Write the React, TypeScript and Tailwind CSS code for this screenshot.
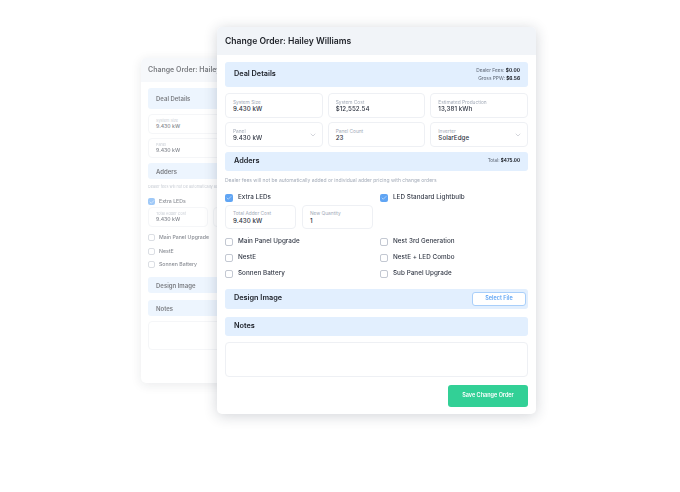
import { ChevronDown, Check } from "lucide-react";
import React from "react";

const Field = ({ label, value, chevron, small }: { label: string; value: string; chevron?: boolean; small?: boolean }) => (
  <div className={`relative min-w-0 rounded-[4px] border border-[#eef0f4] bg-white pl-[7px] ${small ? "h-[20px] pt-[3px]" : "h-[24.5px] pt-[4.5px]"}`}>
    <div className={`whitespace-nowrap text-[#a3abb8] ${small ? "text-[3.8px] leading-[5px]" : "text-[4.8px] leading-[6.5px]"}`}>{label}</div>
    <div className={`whitespace-nowrap font-medium text-[#2f3542] ${small ? "text-[5.2px] leading-[7px]" : "text-[6.2px] leading-[8.5px] tracking-[0.05px]"}`}>{value}</div>
    {chevron && <ChevronDown size={8} strokeWidth={1} className="absolute right-[5px] top-[8px] text-[#7b8494]" />}
  </div>
);

const Adder = ({ label, checked, small }: { label: string; checked?: boolean; small?: boolean }) => (
  <div className={`flex h-[9px] items-center ${small ? "gap-[4px]" : "gap-[5px]"}`}>
    {checked ? (
      <div className={`flex items-center justify-center rounded-[2px] bg-[#60a5f4] ${small ? "h-[7px] w-[7px]" : "h-[8px] w-[8px]"}`}>
        <Check size={6} strokeWidth={2} className="text-white" />
      </div>
    ) : (
      <div className={`rounded-[2px] border border-[#c3c8d2] bg-white ${small ? "h-[7px] w-[7px]" : "h-[8px] w-[8px]"}`} />
    )}
    <span className={`whitespace-nowrap font-medium text-[#353b48] ${small ? "text-[5.2px]" : "text-[6.3px] tracking-[0.05px]"}`}>{label}</span>
  </div>
);

const Band = ({ title, className, small, children }: { title: string; className: string; small?: boolean; children?: React.ReactNode }) => (
  <div className={`flex items-center justify-between rounded-[3px] bg-[#e2effe] pr-[8px] ${small ? "pl-[8px]" : "pl-[9px]"} ${className}`}>
    <span className={`font-semibold text-[#20242c] ${small ? "text-[6px]" : "text-[7.3px]"}`}>{title}</span>
    {children}
  </div>
);

const BackCard = () => (
  <div className="absolute left-[141px] top-[58px] h-[325px] w-[200px] overflow-hidden rounded-[5px] bg-white opacity-60 shadow-[0_2px_12px_rgba(30,41,59,0.16)]">
    <div className="flex h-[24px] items-center bg-[#f1f4f8] pl-[7px] text-[7px] font-semibold whitespace-nowrap text-[#20242c]">
      Change Order: Hailey Williams
    </div>
    <div className="flex w-[260px] flex-col px-[7px] pt-[6px]">
      <Band small title="Deal Details" className="h-[21px]" />
      <div className="mt-[5px] w-[90px]"><Field small label="System Size" value="9.430 kW" /></div>
      <div className="mt-[4px] w-[90px]"><Field small label="Panel" value="9.430 kW" /></div>
      <Band small title="Adders" className="mt-[5px] h-[16px]" />
      <p className="mt-[5px] text-[3.8px] leading-[6px] whitespace-nowrap text-[#a3abb8]">Dealer fees will not be automatically added or individual adder pricing</p>
      <div className="mt-[7px]"><Adder small label="Extra LEDs" checked /></div>
      <div className="mt-[1px] grid w-[125px] grid-cols-2 gap-x-[5px]">
        <Field small label="Total Adder Cost" value="9.430 kW" />
        <Field small label="New Quantity" value="1" />
      </div>
      <div className="mt-[6px]"><Adder small label="Main Panel Upgrade" /></div>
      <div className="mt-[5px]"><Adder small label="NestE" /></div>
      <div className="mt-[4px]"><Adder small label="Sonnen Battery" /></div>
      <Band small title="Design Image" className="mt-[8px] h-[16px]" />
      <Band small title="Notes" className="mt-[7px] h-[16px]" />
      <div className="mt-[5px] h-[29px] rounded-[4px] border border-[#eef0f4]" />
    </div>
  </div>
);

const FrontCard = () => (
  <div className="absolute left-[217px] top-[27px] h-[387px] w-[319px] overflow-hidden rounded-[5px] bg-white shadow-[0_2px_14px_rgba(30,41,59,0.2)]">
    <div className="flex h-[28px] items-center bg-[#f1f4f8] pl-[8px] text-[8.6px] font-semibold text-[#1d2027]">
      Change Order: Hailey Williams
    </div>
    <div className="flex flex-col px-[8px] pt-[7px]">
      <Band title="Deal Details" className="h-[25px]">
        <div className="flex flex-col items-end text-[4.8px] leading-[7.5px] text-[#5b6472]">
          <span>Dealer Fees: <b className="font-bold text-[#20242c]">$0.00</b></span>
          <span>Gross PPW: <b className="font-bold text-[#20242c]">$6.56</b></span>
        </div>
      </Band>
      <div className="mt-[6px] grid grid-cols-3 gap-x-[5px] gap-y-[4.5px]">
        <Field label="System Size" value="9.430 kW" />
        <Field label="System Cost" value="$12,552.54" />
        <Field label="Estimated Production" value="13,381 kWh" />
        <Field label="Panel" value="9.430 kW" chevron />
        <Field label="Panel Count" value="23" />
        <Field label="Inverter" value="SolarEdge" chevron />
      </div>
      <Band title="Adders" className="mt-[5.5px] h-[19px]">
        <span className="text-[4.6px] text-[#5b6472]">Total: <b className="font-bold text-[#20242c]">$475.00</b></span>
      </Band>
      <p className="mt-[6px] text-[5px] leading-[6px] whitespace-nowrap text-[#a3abb8]">
        Dealer fees will not be automatically added or individual adder pricing with change orders
      </p>
      <div className="mt-[10px] grid grid-cols-[155px_1fr]">
        <Adder label="Extra LEDs" checked />
        <Adder label="LED Standard Lightbulb" checked />
      </div>
      <div className="mt-[2.5px] grid w-[148px] grid-cols-2 gap-x-[6px]">
        <Field label="Total Adder Cost" value="9.430 kW" />
        <Field label="New Quantity" value="1" />
      </div>
      <div className="mt-[8.5px] grid grid-cols-[155px_1fr] gap-y-[7px]">
        <Adder label="Main Panel Upgrade" />
        <Adder label="Nest 3rd Generation" />
        <Adder label="NestE" />
        <Adder label="NestE + LED Combo" />
        <Adder label="Sonnen Battery" />
        <Adder label="Sub Panel Upgrade" />
      </div>
      <Band title="Design Image" className="mt-[10px] h-[20px] !pr-[2px]">
        <button className="h-[14px] w-[54px] rounded-[3px] border border-[#a9cffa] bg-white text-[5.5px] font-semibold text-[#60a5f4]">Select File</button>
      </Band>
      <Band title="Notes" className="mt-[8px] h-[19px]" />
      <div className="mt-[6px] h-[35px] rounded-[4px] border border-[#eef0f4]" />
      <div className="mt-[8px] flex justify-end">
        <button className="h-[22px] w-[80px] rounded-[3px] bg-[#32d096] text-[5.5px] font-semibold text-white">Save Change Order</button>
      </div>
    </div>
  </div>
);

export default function App() {
  return (
    <div className="relative h-[492px] w-[680px] overflow-hidden bg-white font-['Inter','Noto_Sans',sans-serif] antialiased">
      <BackCard />
      <FrontCard />
    </div>
  );
}
